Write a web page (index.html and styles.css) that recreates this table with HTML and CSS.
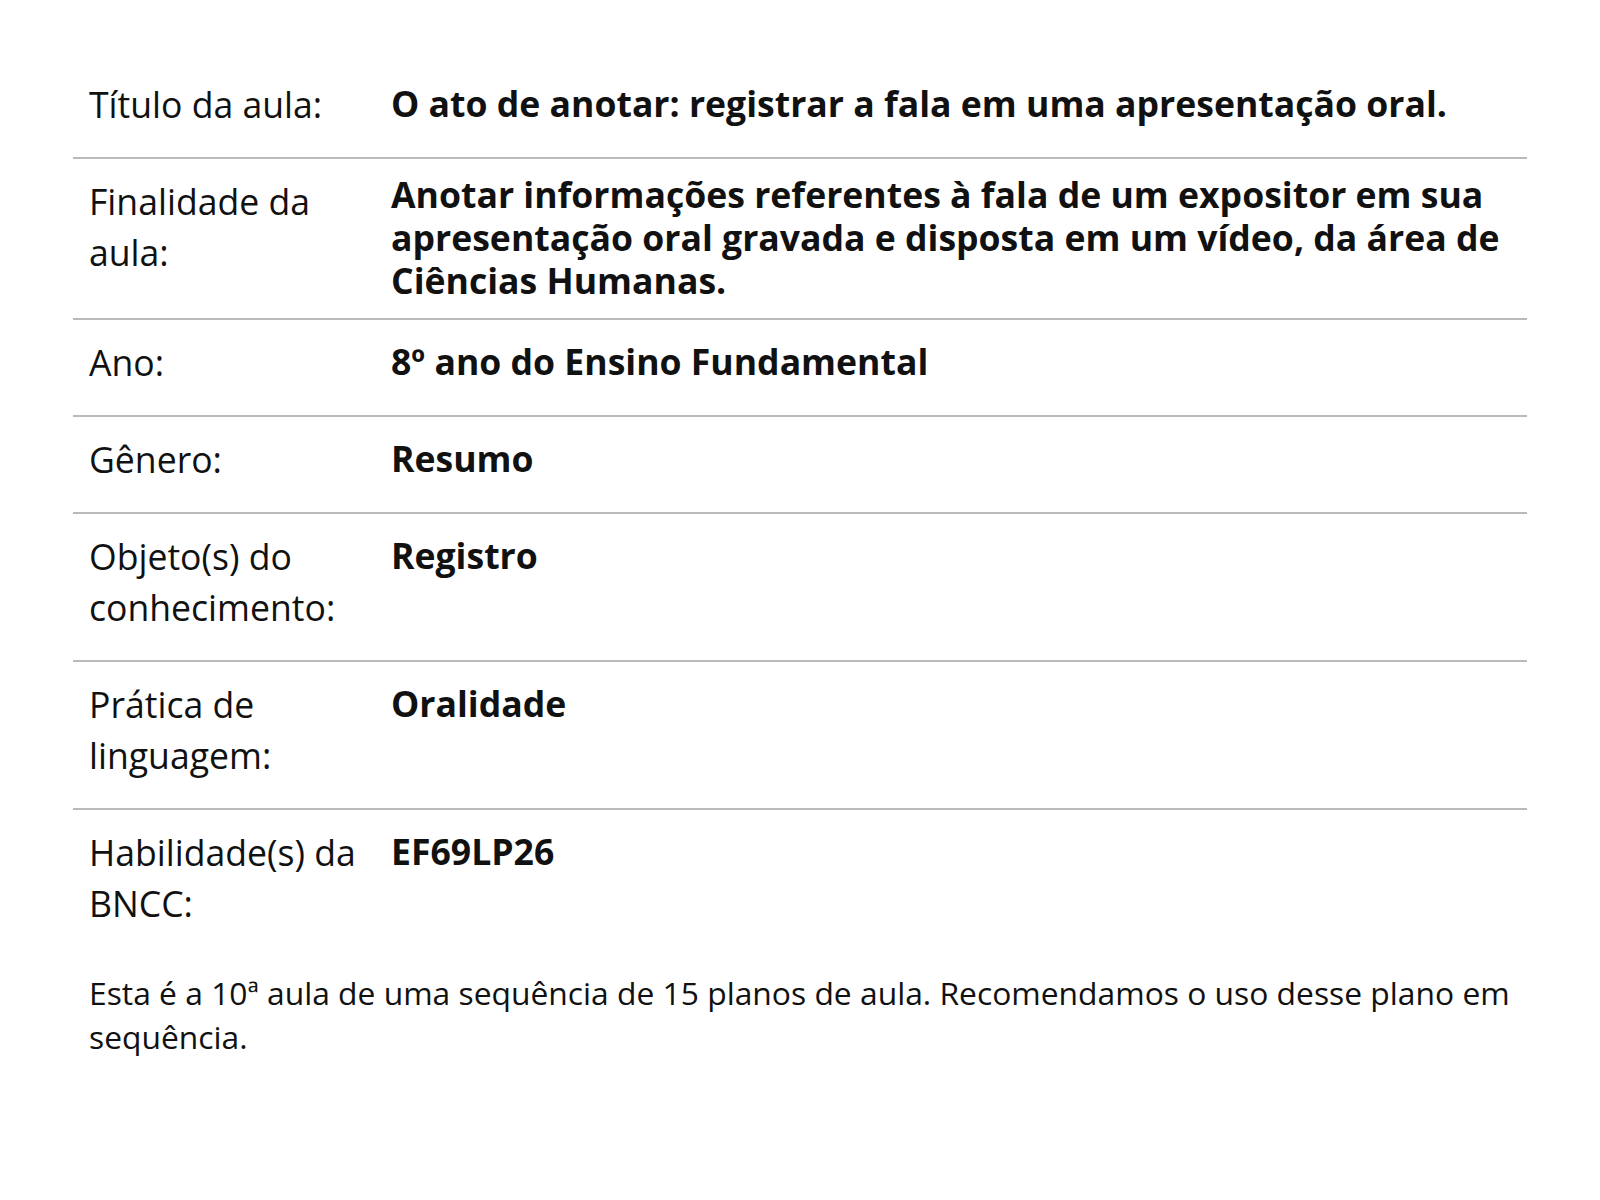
FILE: index.html
```html
<!DOCTYPE html>
<html lang="pt-BR">
<head>
<meta charset="utf-8">
<title>Plano de aula</title>
<link rel="stylesheet" href="styles.css">
</head>
<body>
<main class="page">
  <div class="info-table">
    <div class="row">
      <div class="label">Título da aula:</div>
      <div class="value">O ato de anotar: registrar a fala em uma apresentação oral.</div>
    </div>
    <div class="row">
      <div class="label">Finalidade da aula:</div>
      <div class="value multi">Anotar informações referentes à fala de um expositor em sua apresentação oral gravada e disposta em um vídeo, da área de Ciências Humanas.</div>
    </div>
    <div class="row">
      <div class="label">Ano:</div>
      <div class="value">8º ano do Ensino Fundamental</div>
    </div>
    <div class="row">
      <div class="label">Gênero:</div>
      <div class="value">Resumo</div>
    </div>
    <div class="row">
      <div class="label">Objeto(s) do conhecimento:</div>
      <div class="value">Registro</div>
    </div>
    <div class="row">
      <div class="label">Prática de linguagem:</div>
      <div class="value">Oralidade</div>
    </div>
    <div class="row last">
      <div class="label">Habilidade(s) da BNCC:</div>
      <div class="value">EF69LP26</div>
    </div>
  </div>
  <p class="note">Esta é a 10ª aula de uma sequência de 15 planos de aula. Recomendamos o uso desse plano em sequência.</p>
</main>
</body>
</html>
```

FILE: styles.css
```css
html, body {
  margin: 0;
  padding: 0;
  background: #ffffff;
}

body {
  font-family: "Open Sans", "Noto Sans", sans-serif;
  color: #111111;
}

.page {
  padding: 62px 73px 0 73px;
}

.info-table {
  display: flex;
  flex-direction: column;
}

.row {
  display: grid;
  grid-template-columns: 302px 1fr;
  border-bottom: 2px solid #bababa;
}

.row.last {
  border-bottom: none;
}

.label {
  padding: 17px 16px 27px 16px;
  font-size: 35.6px;
  line-height: 51px;
  font-weight: 400;
}

.value {
  padding: 20px 16px 16px 16px;
  font-size: 35.6px;
  line-height: 43px;
  font-weight: 700;
}

.value.multi {
  padding-top: 14px;
}

.note {
  margin: 15px 0 0 0;
  padding: 0 0 0 16px;
  font-size: 31.8px;
  line-height: 44px;
}
```
